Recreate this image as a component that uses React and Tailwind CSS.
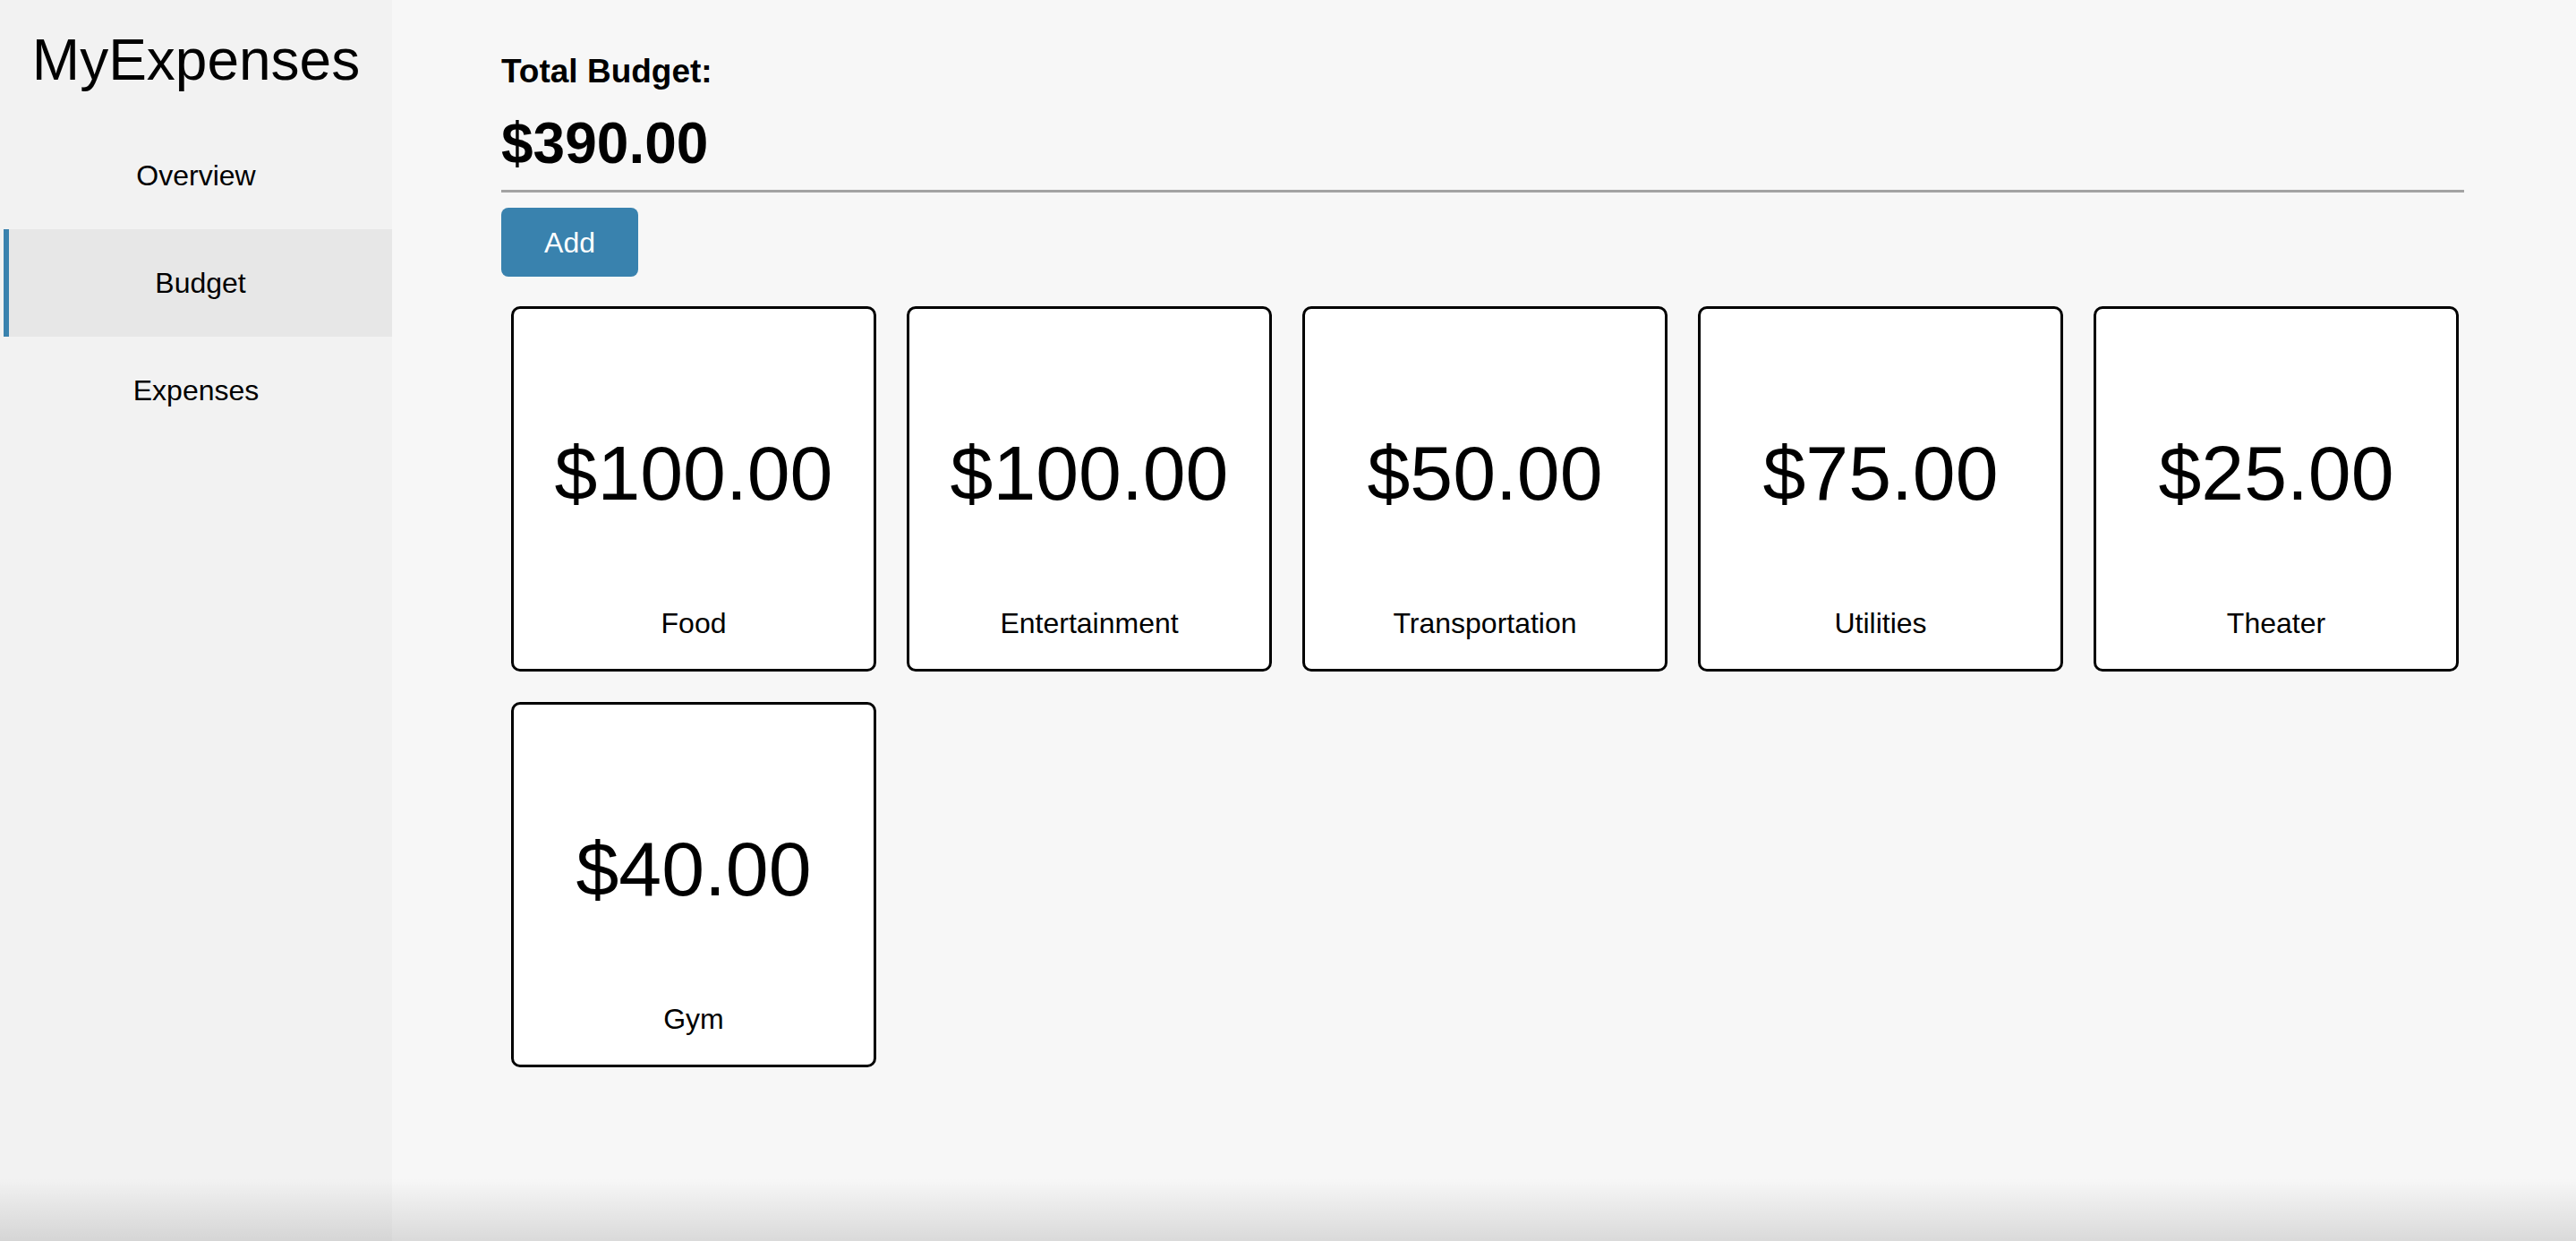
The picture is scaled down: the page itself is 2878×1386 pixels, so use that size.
import React from "react";

const budgets = [
  { name: "Food", amount: 100 },
  { name: "Entertainment", amount: 100 },
  { name: "Transportation", amount: 50 },
  { name: "Utilities", amount: 75 },
  { name: "Theater", amount: 25 },
  { name: "Gym", amount: 40 },
];

const navItems = ["Overview", "Budget", "Expenses"];

const money = (n) => `$${n.toFixed(2)}`;

const Sidebar = ({ active }) => (
  <aside className="w-[438px] shrink-0 bg-[#f2f2f2]">
    <h1 className="pt-[30px] text-center text-[64px] leading-[74px] font-normal">MyExpenses</h1>
    <nav className="mt-[32px] flex flex-col">
      {navItems.map((item) =>
        item === active ? (
          <a
            key={item}
            className="ml-[4px] flex h-[120px] items-center justify-center border-l-[6px] border-[#3a82ae] bg-[#e7e7e7] text-[32px]"
          >
            {item}
          </a>
        ) : (
          <a key={item} className="flex h-[120px] items-center justify-center text-[32px]">
            {item}
          </a>
        )
      )}
    </nav>
  </aside>
);

const BudgetCard = ({ name, amount }) => (
  <div className="flex h-[408px] w-[408px] flex-col items-center rounded-[10px] border-[3px] border-black bg-white">
    <div className="pt-[133px] text-[86px] leading-[100px]">{money(amount)}</div>
    <div className="mt-[100px] text-[32px] leading-[37px]">{name}</div>
  </div>
);

export default function App() {
  const total = budgets.reduce((s, b) => s + b.amount, 0);

  return (
    <div
      className="relative flex h-screen overflow-hidden bg-[#f7f7f7] text-black"
      style={{ fontFamily: '"Liberation Sans", Arial, Helvetica, sans-serif' }}
    >
      <Sidebar active="Budget" />

      <main className="flex-1 pl-[122px] pr-[125px] pt-[58px]">
        <h3 className="text-[37px] leading-[44px] font-bold">Total Budget:</h3>
        <h2 className="mt-[21px] text-[64px] leading-[74px] font-bold">{money(total)}</h2>
        <hr className="mt-[15px] border-0 border-t-[3px] border-[#a3a3a3]" />
        <button className="mt-[17px] h-[77px] w-[153px] rounded-[8px] bg-[#3982ae] text-[32px] text-white">
          Add
        </button>
        <div className="mt-[33px] flex flex-wrap gap-[34px] pl-[11px]">
          {budgets.map((b) => (
            <BudgetCard key={b.name} {...b} />
          ))}
        </div>
      </main>

      <div className="pointer-events-none absolute inset-x-0 bottom-0 h-[70px] bg-gradient-to-b from-transparent to-black/12" />
    </div>
  );
}
